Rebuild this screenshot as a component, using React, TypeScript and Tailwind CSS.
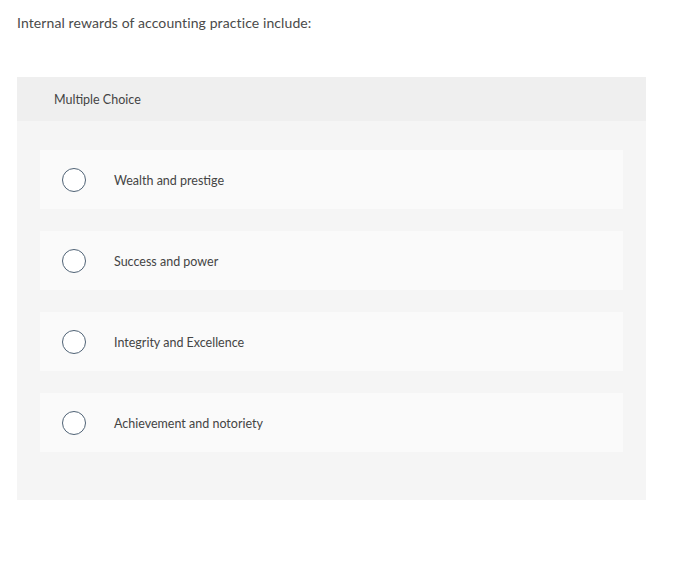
export default function App() {
  const options = [
    "Wealth and prestige",
    "Success and power",
    "Integrity and Excellence",
    "Achievement and notoriety",
  ];
  return (
    <div className="w-[700px] h-[588px] bg-white font-['Lato',sans-serif]">
      <div className="pl-[17px] pt-[14px] text-[14px] leading-[18px] text-[#4a4a4a] tracking-[0.1px]">
        Internal rewards of accounting practice include:
      </div>
      <div className="ml-[17px] mt-[45px] w-[629px] bg-[#f5f5f5]">
        <div className="h-[44px] bg-[#efefef] pl-[37px] pt-[2px] flex items-center text-[12.5px] text-[#444]">
          Multiple Choice
        </div>
        <div className="px-[23px] pt-[29px] pb-[48px] flex flex-col gap-[22px]">
          {options.map((o) => (
            <div key={o} className="h-[59px] bg-[#fafafa] flex items-center">
              <div className="ml-[22px] w-[24px] h-[24px] rounded-full border-[1.5px] border-[#4f6275] bg-white"></div>
              <div className="ml-[28px] pt-[3px] text-[12.5px] text-[#444]">{o}</div>
            </div>
          ))}
        </div>
      </div>
    </div>
  );
}
